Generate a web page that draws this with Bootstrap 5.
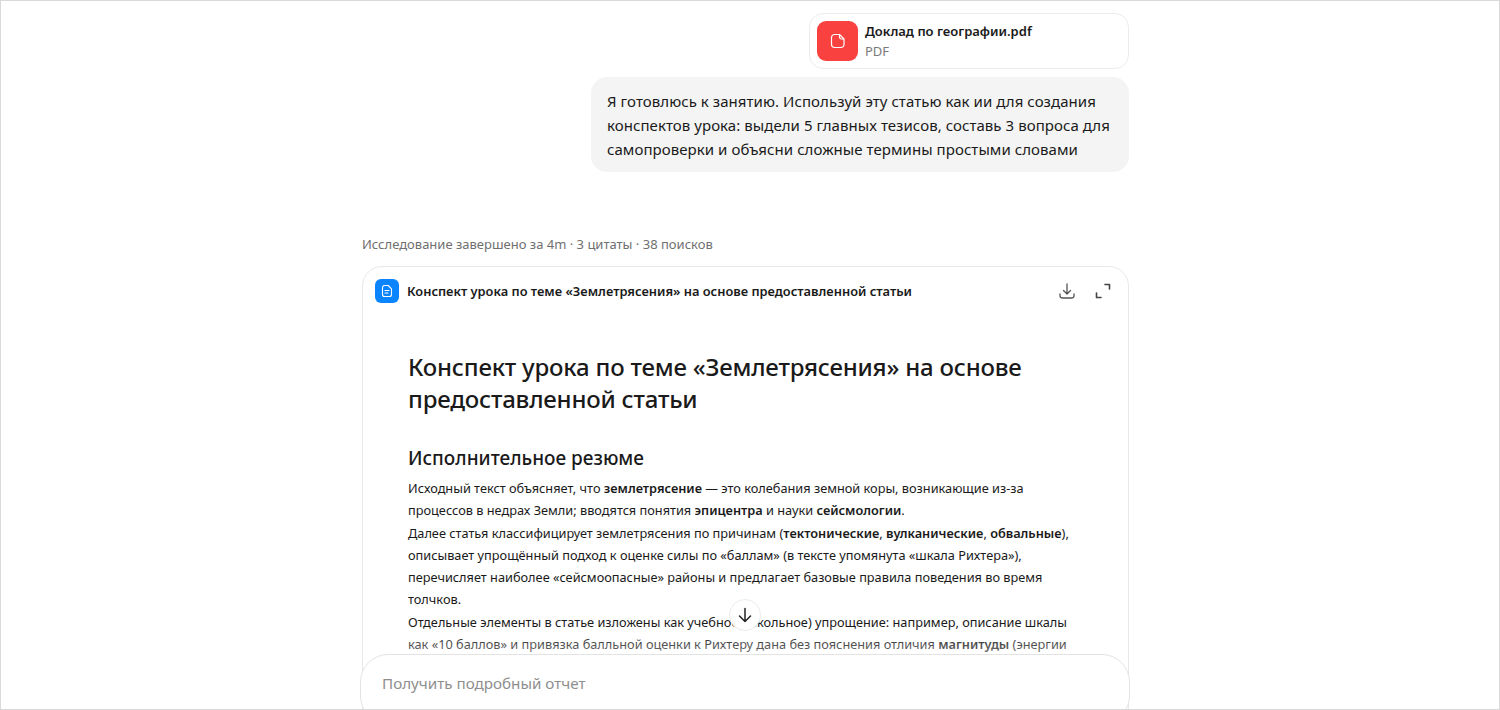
<!DOCTYPE html>
<html lang="ru">
<head>
    <meta charset="UTF-8">
    <meta name="viewport" content="width=device-width, initial-scale=1.0">
    <title>Исследование</title>
    <link href="https://cdn.jsdelivr.net/npm/bootstrap@5.3.0/dist/css/bootstrap.min.css" rel="stylesheet">
    <script src="https://cdn.jsdelivr.net/npm/bootstrap@5.3.0/dist/js/bootstrap.bundle.min.js"></script>
    <style>
        html, body {
            height: 100%;
        }
        body {
            overflow: hidden;
            font-family: "Noto Sans", "Open Sans", sans-serif;
            color: #1a1a1a;
        }
        .chat-frame {
            position: relative;
            height: 710px;
            overflow: hidden;
            border: 1px solid #d9d9d9;
            background: #fff;
        }
        .chat-col {
            width: 767px;
            margin-left: 361px;
            padding-top: 12px;
        }
        .file-chip {
            width: 320px;
            height: 56px;
            padding: 7px;
            gap: 7px;
            border: 1px solid #ececec;
            border-radius: 14px;
        }
        .file-icon {
            width: 41px;
            height: 40px;
            border-radius: 9px;
            background: #f9423f;
        }
        .file-name {
            font-size: 13px;
            font-weight: 600;
            line-height: 20px;
        }
        .file-type {
            font-size: 13px;
            line-height: 20px;
            color: #7a7a7a;
        }
        .user-msg {
            width: 538px;
            margin-top: 8px;
            padding: 12px 16px 11px;
            border-radius: 16px;
            background: #f4f4f4;
            font-size: 15px;
            line-height: 24px;
            letter-spacing: .06px;
        }
        .research-meta {
            margin-top: 62px;
            font-size: 13px;
            line-height: 20px;
            color: #6f6f6f;
        }
        .report-card {
            margin-top: 12px;
            height: 600px;
            border: 1px solid #e8e8e8;
            border-radius: 20px;
        }
        .report-head {
            height: 48px;
            padding: 0 15px 0 12px;
        }
        .doc-icon {
            width: 24px;
            height: 24px;
            border-radius: 6px;
            background: #0a84ff;
        }
        .report-title {
            padding-top: 2px;
            font-size: 12.85px;
            font-weight: 600;
        }
        .report-body {
            padding: 36px 45px 0;
        }
        .report-body h1 {
            font-size: 24px;
            font-weight: 500;
            line-height: 32px;
            margin: 0 0 30px;
            letter-spacing: -.2px;
        }
        .report-body h2 {
            font-size: 19px;
            font-weight: 500;
            line-height: 26px;
            margin: 0 0 6px;
        }
        .report-body p {
            font-size: 12.75px;
            line-height: 22.3px;
            margin: 0;
            white-space: nowrap;
        }
        .report-body b {
            font-weight: 600;
        }
        .fade-out {
            position: absolute;
            left: 362px;
            top: 630px;
            width: 764px;
            height: 30px;
            background: linear-gradient(to bottom, rgba(255,255,255,0), rgba(255,255,255,.5));
        }
        .scroll-btn {
            position: absolute;
            left: 728px;
            top: 598px;
            width: 32px;
            height: 32px;
            border: 1px solid #ececec;
            border-radius: 50%;
            background: #fff;
        }
        .composer {
            position: absolute;
            left: 359px;
            top: 653px;
            width: 770px;
            height: 70px;
            padding: 17px 21px;
            border: 1px solid #e3e3e3;
            border-radius: 28px;
            background: #fff;
            font-size: 15.2px;
            line-height: 22px;
            color: #8e8e8e;
        }
    </style>
</head>
<body>
    <div class="chat-frame">
        <div class="chat-col">
            <div class="d-flex flex-column align-items-end">
                <div class="file-chip d-flex align-items-center bg-white">
                    <div class="file-icon d-flex align-items-center justify-content-center flex-shrink-0">
                        <svg width="16" height="16" viewBox="0 0 16 16" fill="none" stroke="#fff" stroke-width="1.2" stroke-linejoin="round"><path d="M4.500 1.500h5L14 6v5.500a3 3 0 0 1-3 3H4.500a3 3 0 0 1-3-3v-7a3 3 0 0 1 3-3z"/><path d="M9.500 1.500V4a2 2 0 0 0 2 2H14"/></svg>
                    </div>
                    <div>
                        <div class="file-name">Доклад по географии.pdf</div>
                        <div class="file-type">PDF</div>
                    </div>
                </div>
                <div class="user-msg">Я готовлюсь к занятию. Используй эту статью как ии для создания конспектов урока: выдели 5 главных тезисов, составь 3 вопроса для самопроверки и объясни сложные термины простыми словами</div>
            </div>

            <div class="research-meta">Исследование завершено за 4m · 3 цитаты · 38 поисков</div>

            <div class="report-card">
                <div class="report-head d-flex align-items-center">
                    <div class="doc-icon d-flex align-items-center justify-content-center me-2">
                        <svg width="14" height="14" viewBox="0 0 14 14" fill="none" stroke="#fff" stroke-width="1.1" stroke-linejoin="round" stroke-linecap="round"><path d="M4 1.500h4.200L11.500 4.800V10.500a2 2 0 0 1-2 2h-5a2 2 0 0 1-2-2v-7a2 2 0 0 1 2-2z"/><path d="M5 6.500h4M5 9h3"/></svg>
                    </div>
                    <div class="report-title flex-grow-1">Конспект урока по теме «Землетрясения» на основе предоставленной статьи</div>
                    <div class="d-flex align-items-center gap-3">
                        <svg width="20" height="20" viewBox="0 0 20 20" fill="none" stroke="#555" stroke-width="1.3" stroke-linecap="round" stroke-linejoin="round"><path d="M10 3v9.500M6.500 9.500 10 13l3.500-3.500"/><path d="M3 13v1.500A2.500 2.500 0 0 0 5.500 17h9a2.500 2.500 0 0 0 2.500-2.500V13"/></svg>
                        <svg width="20" height="20" viewBox="0 0 20 20" fill="none" stroke="#444" stroke-width="1.6" stroke-linecap="round" stroke-linejoin="round"><path d="M12 3.500h4.500V8M8 16.500H3.500V12"/></svg>
                    </div>
                </div>
                <div class="report-body">
                    <h1>Конспект урока по теме «Землетрясения» на основе предоставленной статьи</h1>
                    <h2>Исполнительное резюме</h2>
                    <p>Исходный текст объясняет, что <b>землетрясение</b> — это колебания земной коры, возникающие из-за</p>
                    <p>процессов в недрах Земли; вводятся понятия <b>эпицентра</b> и науки <b>сейсмологии</b>.</p>
                    <p>Далее статья классифицирует землетрясения по причинам (<b>тектонические</b>, <b>вулканические</b>, <b>обвальные</b>),</p>
                    <p>описывает упрощённый подход к оценке силы по «баллам» (в тексте упомянута «шкала Рихтера»),</p>
                    <p>перечисляет наиболее «сейсмоопасные» районы и предлагает базовые правила поведения во время</p>
                    <p>толчков.</p>
                    <p>Отдельные элементы в статье изложены как учебное (школьное) упрощение: например, описание шкалы</p>
                    <p>как «10 баллов» и привязка балльной оценки к Рихтеру дана без пояснения отличия <b>магнитуды</b> (энергии</p>
                </div>
            </div>
        </div>
        <div class="fade-out"></div>
        <div class="scroll-btn d-flex align-items-center justify-content-center">
            <svg width="18" height="18" viewBox="0 0 18 18" fill="none" stroke="#222" stroke-width="1.5" stroke-linecap="round" stroke-linejoin="round"><path d="M9 2.500v13M3.500 10 9 15.500 14.500 10"/></svg>
        </div>
        <div class="composer">Получить подробный отчет</div>
    </div>
</body>
</html>
